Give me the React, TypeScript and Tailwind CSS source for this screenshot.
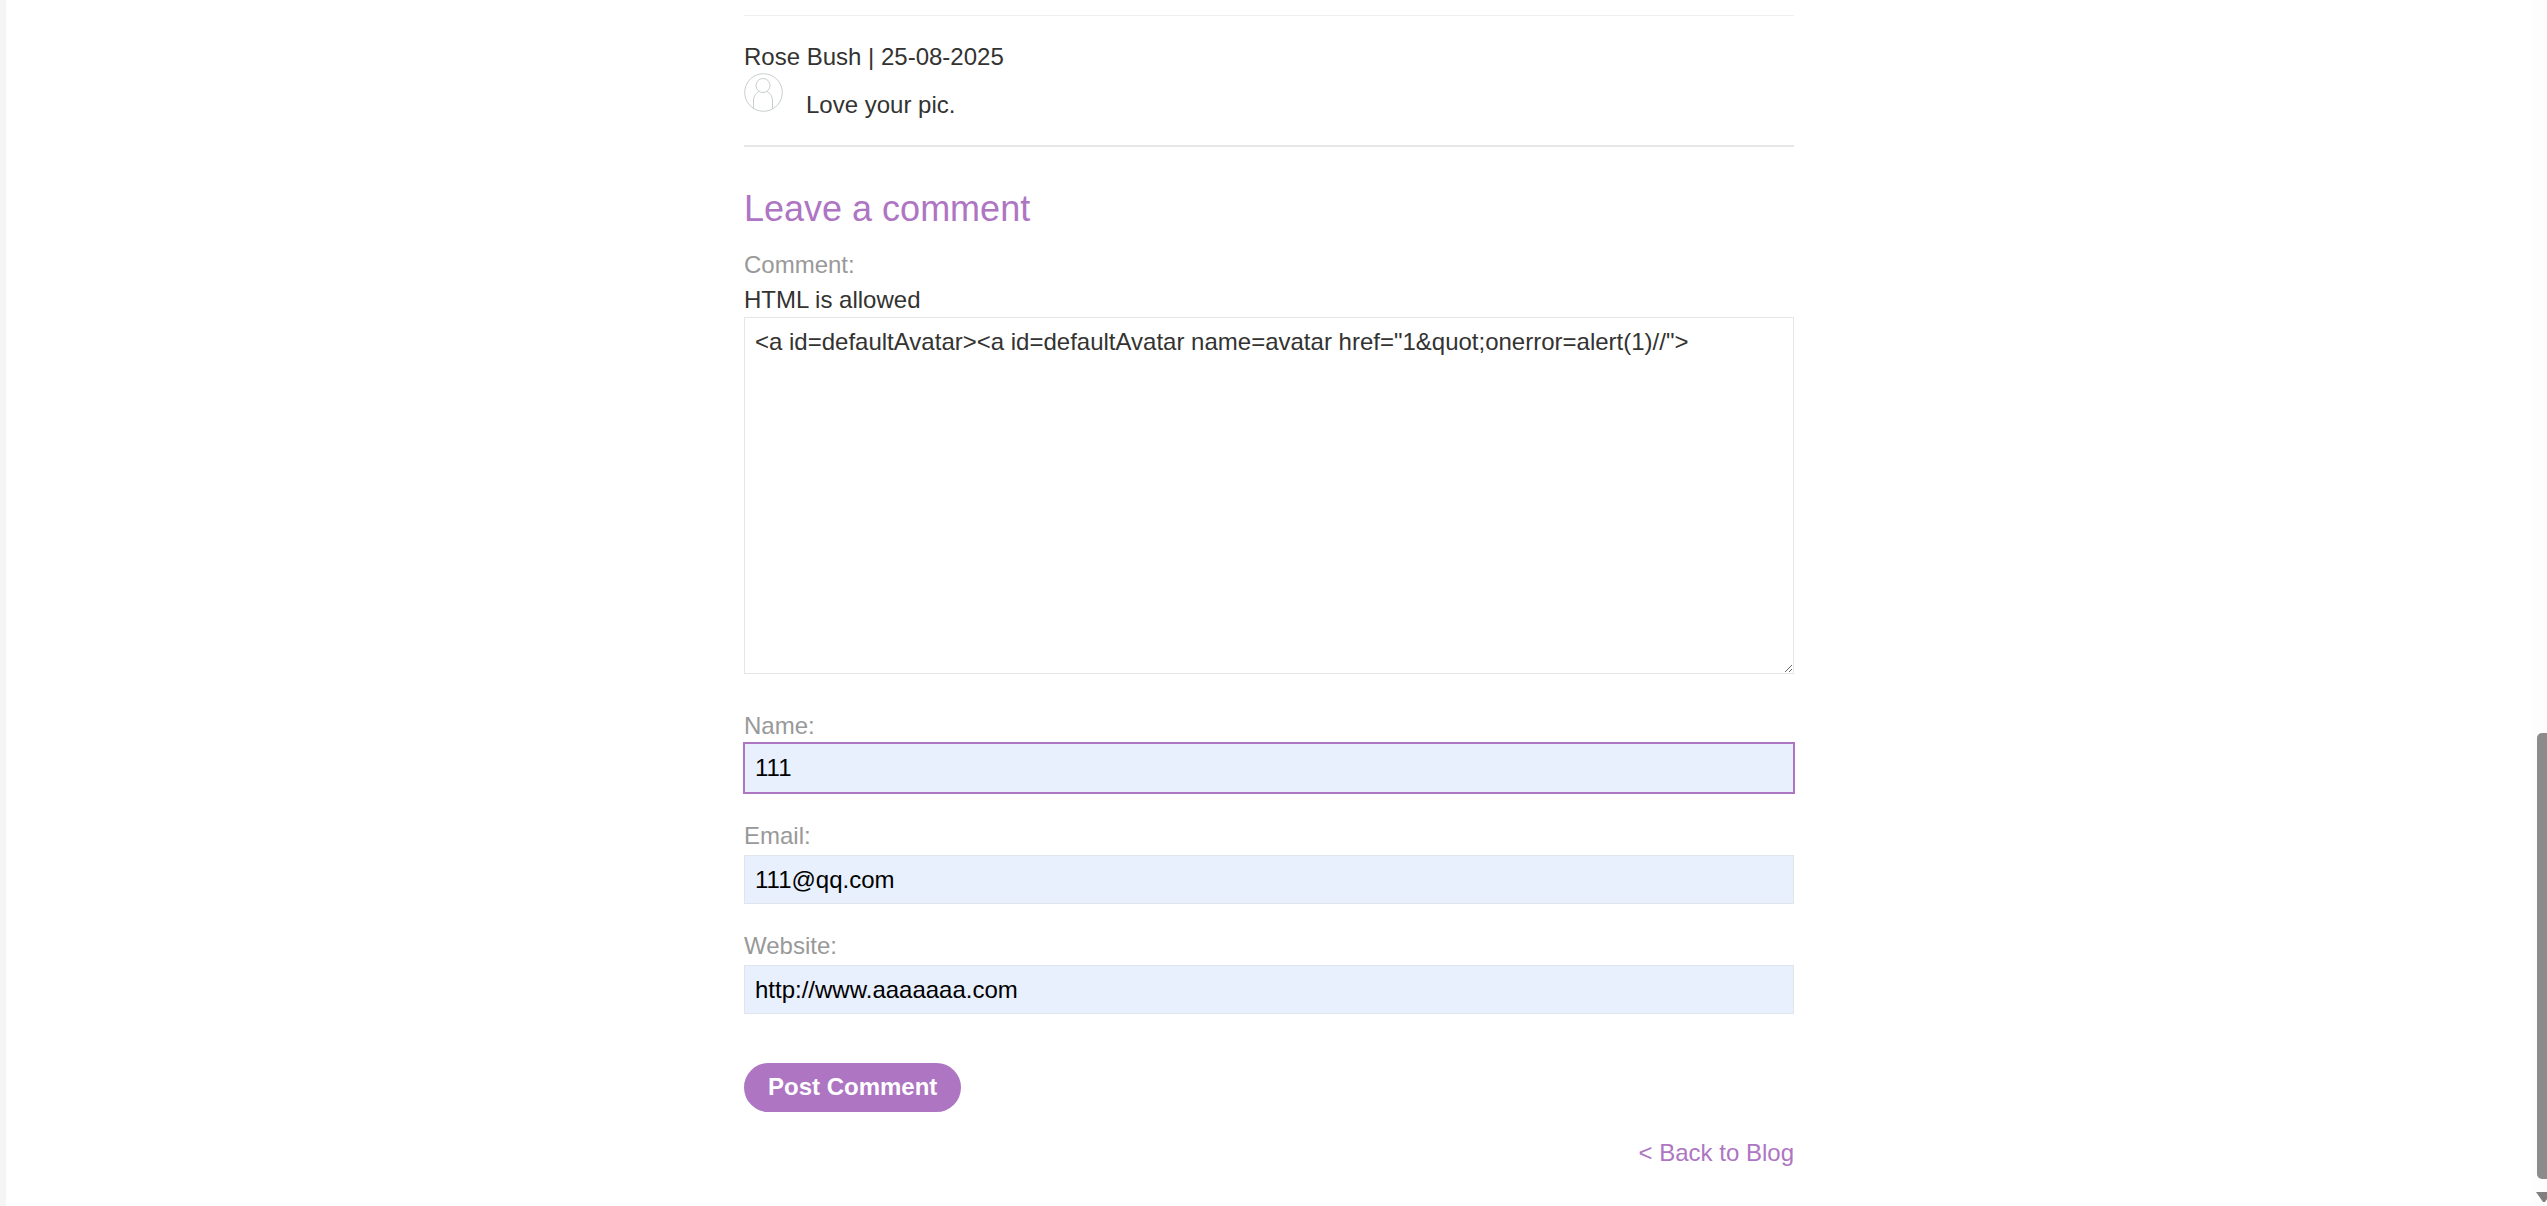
const commentHtml = '<a id=defaultAvatar><a id=defaultAvatar name=avatar href="1&quot;onerror=alert(1)//">'

function AvatarIcon() {
  return (
    <svg width="39" height="39" viewBox="0 0 39 39" fill="none" stroke="#c9cece" strokeWidth="1" className="shrink-0">
      <circle cx="19.5" cy="19.5" r="18.8" />
      <circle cx="19" cy="12.5" r="7" />
      <path d="M9.5 36 V28 C9.5 22.5 13 19.5 15 18.5 M28.5 36 V28 C28.5 22.5 25 19.5 23 18.5" />
    </svg>
  )
}

function Field({ label, value, focused, className }: { label: string; value: string; focused?: boolean; className: string }) {
  return (
    <>
      <label className={`block h-[30px] leading-[30px] text-[#999999] ${className}`}>{label}</label>
      <input
        readOnly
        value={value}
        className={`block w-full px-[10px] bg-[#e8f0fe] text-black text-[24px] border ${
          focused
            ? 'h-[50px] border-[#ae75c3] outline outline-1 outline-[#ae75c3] mt-[2px]'
            : 'h-[49px] border-[#e0e4ec] outline-none mt-[4px]'
        }`}
      />
    </>
  )
}

export default function App() {
  return (
    <div className="flex h-screen overflow-hidden bg-white font-['Liberation_Sans',Arial,sans-serif] text-[24px] text-[#333332]">
      <div className="w-[6px] shrink-0 bg-[#f5f5f5]" />

      <main className="flex-1">
        <div className="mx-auto w-[1050px] pt-[15px]">
          <hr className="border-t border-[#eeeeee]" />

          {/* Comment */}
          <p className="mt-[26px] h-[30px] leading-[30px]">Rose Bush | 25-08-2025</p>
          <div className="flex items-start mt-px">
            <AvatarIcon />
            <p className="ml-[23px] mt-[17px] h-[30px] leading-[30px]">Love your pic.</p>
          </div>
          <hr className="mt-[25px] border-t-2 border-[#e6e6e6]" />

          {/* Form */}
          <h2 className="mt-[40px] h-[44px] leading-[44px] text-[36px] text-[#ae75c3]">Leave a comment</h2>
          <label className="block mt-[19px] h-[30px] leading-[30px] text-[#999999]">Comment:</label>
          <p className="mt-[5px] h-[30px] leading-[30px]">HTML is allowed</p>
          <textarea
            readOnly
            value={commentHtml}
            className="block w-full h-[357px] mt-[2px] px-[10px] py-[9px] border border-[#e6e6e6] bg-white text-[24px] leading-[30px] text-[#333332] outline-none"
          />

          <Field label="Name:" value="111" focused className="mt-[37px]" />
          <Field label="Email:" value="111@qq.com" className="mt-[28px]" />
          <Field label="Website:" value="http://www.aaaaaaa.com" className="mt-[27px]" />

          <button className="block mt-[49px] h-[49px] px-[24px] pb-[2px] rounded-[25px] bg-[#ae75c3] text-white font-bold text-[24px]">
            Post Comment
          </button>
          <div className="mt-[26px] h-[30px] leading-[30px] text-right">
            <a className="text-[#ae75c3]">&lt; Back to Blog</a>
          </div>
        </div>
      </main>

      {/* Scrollbar */}
      <div className="w-[15px] shrink-0 bg-[#fdfdfd] flex flex-col items-end">
        <div className="mt-[733px] h-[446px] w-[10px] rounded-l-[5px] bg-[#8b8b8b]" />
        <svg width="11" height="10" viewBox="0 0 11 10" className="mt-[13px]">
          <path d="M0 0 H11 V7 L9 10 H7 Z" fill="#7f7f7f" />
        </svg>
      </div>
    </div>
  )
}
